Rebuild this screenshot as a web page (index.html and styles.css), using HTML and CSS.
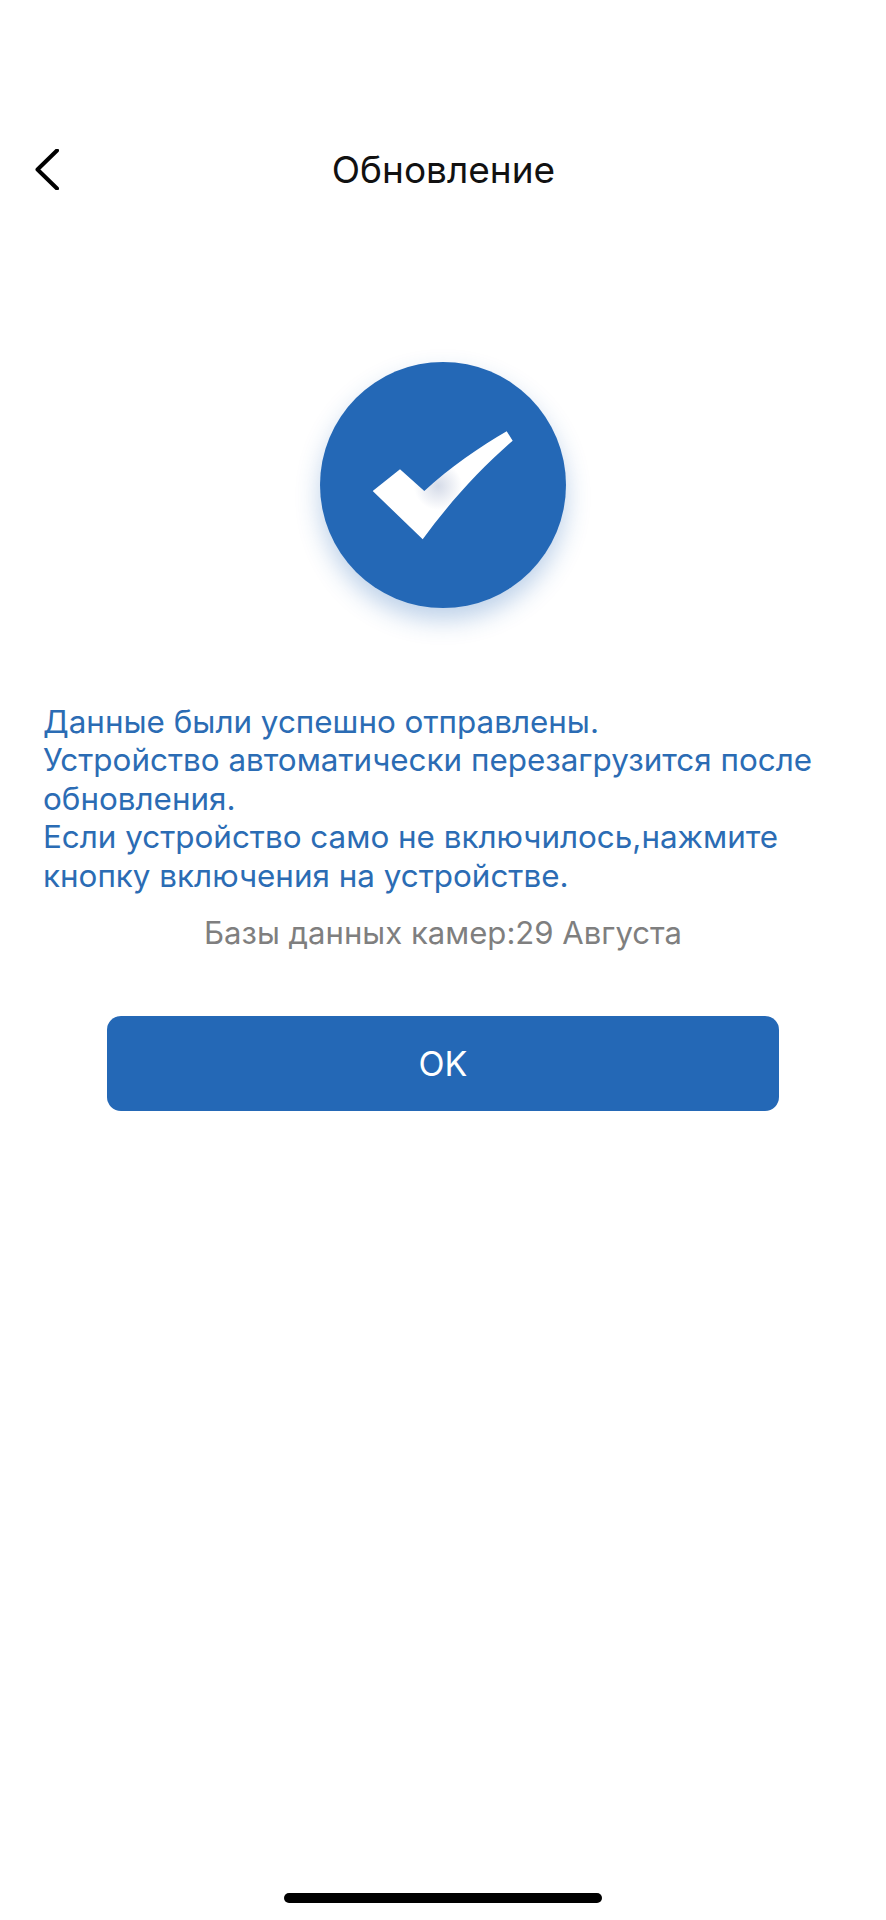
FILE: index.html
```html
<!DOCTYPE html>
<html lang="ru">
<head>
    <meta charset="UTF-8">
    <meta name="viewport" content="width=device-width, initial-scale=1.0">
    <title>Обновление</title>
    <link rel="stylesheet" href="styles.css">
</head>
<body>
    <div class="page">
        <header class="top-bar">
            <button class="back-button" type="button" aria-label="Назад">
                <svg class="back-icon" viewBox="0 0 24 41" width="24" height="41">
                    <path d="M22 1.5 L2.5 20.5 L22 39.5"/>
                </svg>
            </button>
            <h1 class="top-title">Обновление</h1>
        </header>

        <main class="content">
            <div class="status-circle">
                <svg class="status-check" viewBox="0 0 246 246" width="246" height="246">
                    <defs>
                        <radialGradient id="check-shade" gradientUnits="userSpaceOnUse" cx="118" cy="124" r="24">
                            <stop offset="0" stop-color="#d5dbe8"/>
                            <stop offset="1" stop-color="#fff"/>
                        </radialGradient>
                    </defs>
                    <path fill="url(#check-shade)" d="M52.7 129 L80 107.3 L104.3 129 C130 105 160 85 186.7 69.3 L192.7 78.7 C160 107 130 140 102.7 177.3 Z"/>
                </svg>
            </div>

            <p class="message">
                Данные были успешно отправлены.<br>
                Устройство автоматически перезагрузится после обновления.<br>
                Если устройство само не включилось,нажмите кнопку включения на устройстве.
            </p>
            <p class="db-date">Базы данных камер:29 Августа</p>

            <button class="ok-button" type="button">OK</button>
        </main>

        <div class="home-bar"></div>
    </div>
</body>
</html>
```

FILE: styles.css
```css
:root {
    --brand-blue: #2468b6;
    --text-blue: #2b6cb4;
    --text-gray: #7f7f7f;
}

* {
    margin: 0;
    padding: 0;
    box-sizing: border-box;
}

body {
    background: #fff;
    font-family: 'Inter', 'Noto Sans', sans-serif;
}

.page {
    height: 1920px;
    display: flex;
    flex-direction: column;
    overflow: hidden;
}

.top-bar {
    display: grid;
    grid-template-columns: 1fr auto 1fr;
    align-items: center;
    height: 41px;
    margin-top: 147px;
    padding-left: 35px;
}

.back-button {
    justify-self: start;
    display: flex;
    background: none;
    border: none;
}

.back-icon path {
    fill: none;
    stroke: #000;
    stroke-width: 4;
    stroke-linecap: round;
    stroke-linejoin: round;
}

.top-title {
    font-size: 37px;
    font-weight: 400;
    color: #111;
    transform: translateX(-17px);
}

.content {
    display: flex;
    flex-direction: column;
    align-items: center;
    padding: 174px 43px 0;
    flex: 1;
}

.status-circle {
    width: 246px;
    height: 246px;
    border-radius: 50%;
    background: var(--brand-blue);
    box-shadow: 0 12px 24px rgba(36, 104, 182, 0.3);
}

.status-check {
    display: block;
}

.message {
    align-self: stretch;
    margin-top: 94.5px;
    font-size: 31.4px;
    line-height: 38.6px;
    color: var(--text-blue);
}

.db-date {
    margin-top: 19px;
    font-size: 31.1px;
    line-height: 38px;
    color: var(--text-gray);
}

.ok-button {
    width: 672px;
    height: 95px;
    margin-top: 64px;
    background: var(--brand-blue);
    border: none;
    border-radius: 14px;
    font-family: inherit;
    font-size: 34px;
    color: #fff;
}

.home-bar {
    align-self: center;
    width: 318px;
    height: 10px;
    margin-bottom: 17px;
    border-radius: 5px;
    background: #000;
}
```
